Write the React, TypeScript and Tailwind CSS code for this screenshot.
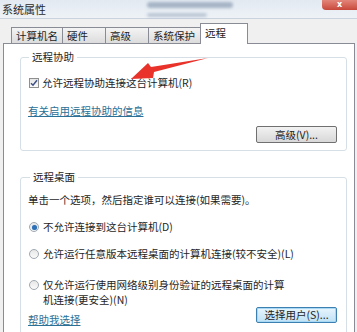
import React from "react";

const Tab = ({ label, w, selected }: { label: string; w: number; selected?: boolean }) => (
  <div
    style={{ width: w }}
    className={
      selected
        ? "relative z-10 -mb-px -ml-px flex h-[21px] items-start justify-center border border-b-0 border-[#898c95] bg-white pt-[2px] pl-[4px]"
        : "-ml-px flex h-[16px] items-center justify-start border border-b-0 border-[#898c95] bg-gradient-to-b from-[#f4f4f4] to-[#dcdcdc] pl-[4px]"
    }
  >
    <span className={selected ? "w-full leading-[14px]" : "leading-[14px]"}>{label}</span>
  </div>
);

const Radio = ({ checked }: { checked?: boolean }) => (
  <span className="mt-[2px] flex h-[10px] w-[10px] shrink-0 items-center justify-center rounded-full border border-[#a0a8b0] bg-gradient-to-b from-[#e8e8e8] to-[#fafafa]">
    {checked && <span className="h-[5px] w-[5px] rounded-full bg-[#2f6fb5] shadow-[0_0_1px_#7ab0e0]" />}
  </span>
);

export default function App() {
  return (
    <div className="relative h-[332px] w-[357px] overflow-hidden bg-[#f0f0f0] text-[10.5px] text-[#1e1e1e] [font-family:'Noto_Sans_CJK_SC','Noto_Sans',sans-serif]">
      {/* title bar */}
      <div className="flex h-[19px] items-center border-b border-[#c9d3de] bg-gradient-to-b from-[#e2e9f1] to-[#eef2f7] pl-[2px]">
        <span className="text-[11px] leading-[14px] text-[#2a2a2a]">系统属性</span>
        <div className="ml-auto flex h-[19px] items-start">
          <div className="flex h-[10px] w-[35px] items-center justify-center rounded-bl-[4px] bg-gradient-to-b from-[#e3857a] to-[#c7473a] [font-family:'DejaVu_Sans',sans-serif] text-[8px] font-bold leading-[8px] text-white">
            x
          </div>
        </div>
      </div>
      {/* blurred redacted caption */}
      <div className="absolute left-[147px] top-[2px] h-[6px] w-[86px] rounded-sm bg-[#8b9db3] opacity-70 blur-[1.5px]" />
      <div className="absolute left-[147px] top-[13px] h-[4px] w-[60px] rounded-sm bg-[#9aabc0] opacity-60 blur-[1.5px]" />

      {/* client */}
      <div className="pl-[3px] pr-[2px] pt-[4px]">
        <div className="flex items-end pl-[9px]">
          <Tab label="计算机名" w={52} />
          <Tab label="硬件" w={44} />
          <Tab label="高级" w={44} />
          <Tab label="系统保护" w={53} />
          <Tab label="远程" w={48} selected />
        </div>
        <div className="h-[300px] border border-[#898c95] bg-white pl-[16px] pr-[7px] pt-[6px]">
          {/* 远程协助 */}
          <fieldset className="rounded-[3px] border border-[#d5dfe5] pb-[7px] pl-[7px] pr-[9px]">
            <legend className="ml-[1px] px-[3px] leading-[14px]">远程协助</legend>
            <div className="mt-[12px] flex h-[14px] items-center gap-[3px] pl-[1px]">
              <span className="flex h-[10px] w-[10px] items-center justify-center border border-[#8e8f8f] bg-gradient-to-b from-[#e6e6e6] to-[#fbfbfb]">
                <svg width="8" height="8" viewBox="0 0 8 8">
                  <path d="M1 4.2 L3 6.2 L7 1.2" fill="none" stroke="#3d4f85" strokeWidth="1.5" />
                </svg>
              </span>
              <span className="leading-[14px]">允许远程协助连接这台计算机(R)</span>
            </div>
            <div className="mt-[14px] leading-[14px]">
              <span className="text-[#2b7096] underline">有关启用远程协助的信息</span>
            </div>
            <div className="mt-[8px] flex justify-end">
              <button className="h-[17px] w-[81px] rounded-[2px] border border-[#707070] bg-gradient-to-b from-[#f2f2f2] to-[#d8d8d8] text-[10.5px] leading-[14px] text-[#1e1e1e]">
                高级(V)...
              </button>
            </div>
          </fieldset>

          {/* 远程桌面 */}
          <fieldset className="mt-[19px] rounded-[3px] border border-[#d5dfe5] pb-[12px] pl-[7px] pr-[9px]">
            <legend className="ml-[2px] px-[3px] leading-[14px]">远程桌面</legend>
            <div className="mt-[9px] leading-[14px]">单击一个选项，然后指定谁可以连接(如果需要)。</div>
            <div className="mt-[13px] flex items-start gap-[4px] pl-[1px] leading-[14px]">
              <Radio checked />
              <span>不允许连接到这台计算机(D)</span>
            </div>
            <div className="mt-[13px] flex items-start gap-[4px] pl-[1px] leading-[14px]">
              <Radio />
              <span>允许运行任意版本远程桌面的计算机连接(较不安全)(L)</span>
            </div>
            <div className="mt-[16px] flex items-start gap-[4px] pl-[1px] leading-[15px]">
              <span className="mt-[1px]">
                <Radio />
              </span>
              <span>
                仅允许运行使用网络级别身份验证的远程桌面的计算
                <br />
                机连接(更安全)(N)
              </span>
            </div>
            <div className="flex items-end justify-between">
              <span className="mb-[-4px] leading-[14px] text-[#2b7096] underline">帮助我选择</span>
              <button className="h-[16px] w-[81px] rounded-[2px] border border-[#3c7fb1] bg-gradient-to-b from-[#e8f5fd] to-[#bfe1f5] text-[10.5px] leading-[14px] text-[#1e1e1e] shadow-[inset_0_0_0_1px_#a8d8f4]">
                选择用户(S)...
              </button>
            </div>
          </fieldset>
        </div>
      </div>

      {/* red annotation arrow */}
      <svg className="pointer-events-none absolute left-0 top-0" width="357" height="332">
        <path d="M131 79 L148 63 L151 67 L208 58 L154 72 L153 78 Z" fill="#e8322a" />
      </svg>
    </div>
  );
}
